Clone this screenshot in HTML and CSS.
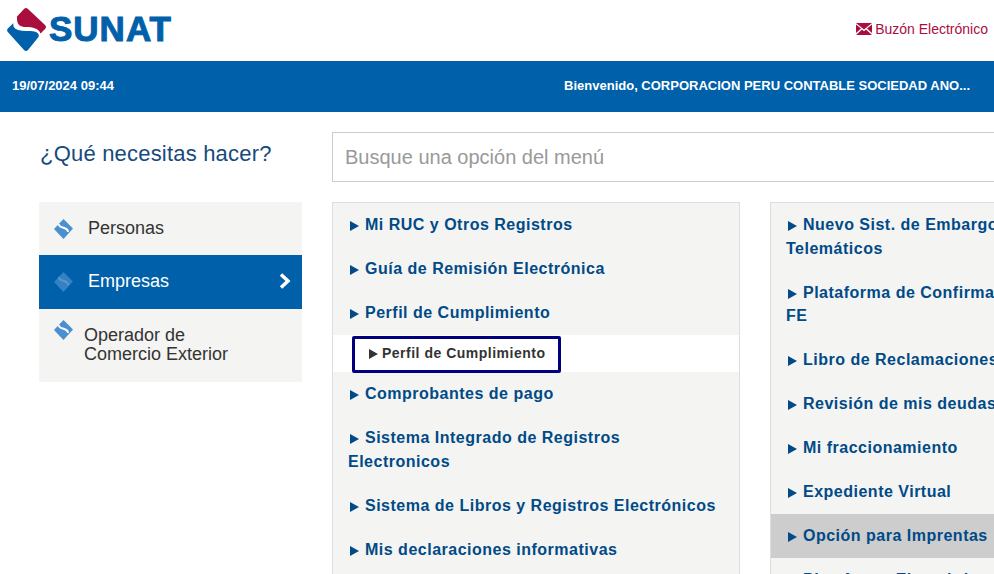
FILE: index.html
```html
<!DOCTYPE html>
<html lang="es">
<head>
    <meta charset="UTF-8">
    <meta name="viewport" content="width=device-width, initial-scale=1.0">
    <title>SUNAT Operaciones en Línea</title>
    <link rel="stylesheet" href="styles.css">
</head>
<body>

<header class="header">
    <div class="logo">
        <svg class="logo-mark" width="40" height="44" viewBox="7 8 40 44">
            <path d="M24 9 Q26 7 28 9 L45 25 Q47 27 45 29 L40.500 33.500 C39 28.500 33 27 26 27 C20 27 16.500 25 17 16.500 Z" fill="#a90e3f"/>
            <path d="M7.800 28.500 L13.500 23 C12 29 18 31 28 31 C36 31 40 33 38.500 37 L28 50 Q26 52 24 50 L7.800 32 Q6.500 30 7.800 28.500 Z" fill="#0060aa"/>
        </svg>
        <span class="logo-text">SUNAT</span>
    </div>
    <a class="mailbox" href="#">
        <svg width="16" height="12" viewBox="0 0 16 12">
            <path d="M0 0 H16 L8 6.500 Z M0 1.500 L5 5.500 L0 10 Z M16 1.500 V10 L11 5.500 Z M0 12 L6 6.500 L8 8.300 L10 6.500 L16 12 Z" fill="#a90e3f"/>
        </svg>
        Buzón Electrónico
    </a>
</header>

<div class="topbar">
    <span class="date">19/07/2024 09:44</span>
    <span class="welcome">Bienvenido, CORPORACION PERU CONTABLE SOCIEDAD ANO...</span>
</div>

<main class="main">
    <div class="side">
        <h2 class="question">¿Qué necesitas hacer?</h2>
        <ul class="profiles">
            <li class="profile">
                <svg class="diamond" width="19" height="20" viewBox="0 0 19 20"><path d="M9.500 0 L19 9.500 L9.500 20 L0 10 Z" fill="#4a8fd0"/><path d="M5 5 C4 10 14 7 14 13" fill="none" stroke="#fff" stroke-width="2"/></svg>
                <span class="profile-name">Personas</span>
            </li>
            <li class="profile active">
                <svg class="diamond" width="19" height="20" viewBox="0 0 19 20"><path d="M9.500 0 L19 9.500 L9.500 20 L0 10 Z" fill="#4a8fd0"/><path d="M5 5 C4 10 14 7 14 13" fill="none" stroke="#7fb0de" stroke-width="2"/></svg>
                <span class="profile-name">Empresas</span>
                <svg class="chevron" width="12" height="16" viewBox="0 0 12 16"><path d="M2 1.500 L9 8 L2 14.500" fill="none" stroke="#fff" stroke-width="3.500"/></svg>
            </li>
            <li class="profile tall">
                <svg class="diamond" width="19" height="20" viewBox="0 0 19 20"><path d="M9.500 0 L19 9.500 L9.500 20 L0 10 Z" fill="#4a8fd0"/><path d="M5 5 C4 10 14 7 14 13" fill="none" stroke="#fff" stroke-width="2"/></svg>
                <span class="profile-name">Operador de<br>Comercio Exterior</span>
            </li>
        </ul>
    </div>

    <div class="content">
        <input class="search" type="text" placeholder="Busque una opción del menú">
        <div class="menus">
            <ul class="menu">
                <li class="item"><span class="arrow"></span>Mi RUC y Otros Registros</li>
                <li class="item"><span class="arrow"></span>Guía de Remisión Electrónica</li>
                <li class="item"><span class="arrow"></span>Perfil de Cumplimiento</li>
                <li class="subitem"><span class="subitem-focus"><span class="arrow"></span>Perfil de Cumplimiento</span></li>
                <li class="item"><span class="arrow"></span>Comprobantes de pago</li>
                <li class="item"><span class="arrow"></span>Sistema Integrado de Registros Electronicos</li>
                <li class="item"><span class="arrow"></span>Sistema de Libros y Registros Electrónicos</li>
                <li class="item"><span class="arrow"></span>Mis declaraciones informativas</li>
            </ul>
            <ul class="menu">
                <li class="item"><span class="arrow"></span>Nuevo Sist. de Embargos<br>Telemáticos</li>
                <li class="item"><span class="arrow"></span>Plataforma de Confirmación<br>FE</li>
                <li class="item"><span class="arrow"></span>Libro de Reclamaciones</li>
                <li class="item"><span class="arrow"></span>Revisión de mis deudas</li>
                <li class="item"><span class="arrow"></span>Mi fraccionamiento</li>
                <li class="item"><span class="arrow"></span>Expediente Virtual</li>
                <li class="item selected"><span class="arrow"></span>Opción para Imprentas</li>
                <li class="item"><span class="arrow"></span>Plataforma Electrónica</li>
            </ul>
        </div>
    </div>
</main>

</body>
</html>
```

FILE: styles.css
```css
html, body {
    height: 574px;
    overflow: hidden;
}
body {
    font-family: "Liberation Sans", Arial, sans-serif;
    background-color: #fff;
    margin: 0;
    padding: 0;
}
ul {
    list-style-type: none;
    margin: 0;
    padding: 0;
}
.header {
    height: 61px;
    display: flex;
    justify-content: space-between;
    align-items: center;
    padding: 0 6px 0 7px;
}
.logo {
    display: flex;
    align-items: center;
    gap: 2px;
}
.logo-mark {
    margin-top: -1px;
}
.logo-text {
    font-size: 35px;
    font-weight: bold;
    color: #0060aa;
    letter-spacing: 1px;
    -webkit-text-stroke: 1px #0060aa;
    margin-top: -3px;
}
.mailbox {
    display: flex;
    align-items: center;
    gap: 3px;
    font-size: 14px;
    color: #a90e3f;
    text-decoration: none;
    margin-top: -3px;
}
.topbar {
    height: 51px;
    background-color: #0060aa;
    color: #fff;
    display: flex;
    justify-content: space-between;
    align-items: center;
    font-size: 13px;
    font-weight: bold;
    padding: 0 24px 2px 12px;
    box-sizing: border-box;
}
.main {
    display: flex;
    padding: 20px 0 0 39px;
    gap: 30px;
}
.side {
    width: 263px;
    flex-shrink: 0;
}
.question {
    font-size: 22px;
    font-weight: normal;
    letter-spacing: 0.2px;
    color: #174a7c;
    margin: 9px 0 35px 1px;
    height: 26px;
    line-height: 26px;
}
.profiles {
    background-color: #f4f4f2;
}
.profile {
    height: 53px;
    display: flex;
    align-items: center;
    padding-left: 15px;
    font-size: 18px;
    color: #333;
}
.profile-name {
    margin-left: 15px;
}
.profile.active {
    height: 54px;
    background-color: #0060aa;
    color: #fff;
}
.profile.active .profile-name {
    margin-top: -2px;
}
.profile.active .diamond {
    opacity: 0.7;
}
.chevron {
    margin-left: auto;
    margin-right: 11px;
    margin-top: -3px;
}
.profile.tall {
    height: 73px;
    align-items: flex-start;
    line-height: 19px;
}
.profile.tall .diamond {
    margin-top: 11px;
}
.profile.tall .profile-name {
    margin: 17px 0 0 11px;
}
.content {
    width: 740px;
    flex-shrink: 0;
}
.search {
    display: block;
    width: 100%;
    box-sizing: border-box;
    height: 50px;
    border: 1px solid #ccc;
    padding: 0 12px;
    font-family: inherit;
    font-size: 20px;
}
.search::placeholder {
    color: #999;
}
.menus {
    display: flex;
    gap: 30px;
    margin-top: 20px;
}
.menu {
    width: 406px;
    flex-shrink: 0;
    background-color: #f4f4f2;
    border: 1px solid #ddd;
    padding-bottom: 20px;
}
.item {
    padding: 10.25px 20px 10.25px 15px;
    font-size: 16px;
    font-weight: bold;
    line-height: 23.5px;
    letter-spacing: 0.5px;
    color: #004a87;
}
.item.selected {
    background-color: #cdcdcd;
}
.arrow {
    display: inline-block;
    border-left: 9px solid #004a87;
    border-top: 5px solid transparent;
    border-bottom: 5px solid transparent;
    margin: 0 6px 0 2px;
    vertical-align: -1px;
}
.subitem {
    background-color: #fff;
    height: 37px;
    display: flex;
    padding: 1px 0 0 19px;
    box-sizing: border-box;
}
.subitem-focus {
    border: 3px solid #00007f;
    border-radius: 2px;
    width: 209px;
    height: 37px;
    line-height: 29px;
    padding-left: 14px;
    box-sizing: border-box;
    font-size: 14px;
    font-weight: bold;
    letter-spacing: 0.5px;
    color: #333;
}
.subitem-focus .arrow {
    border-left-color: #333;
    margin: 0 4px 0 0;
}
```
